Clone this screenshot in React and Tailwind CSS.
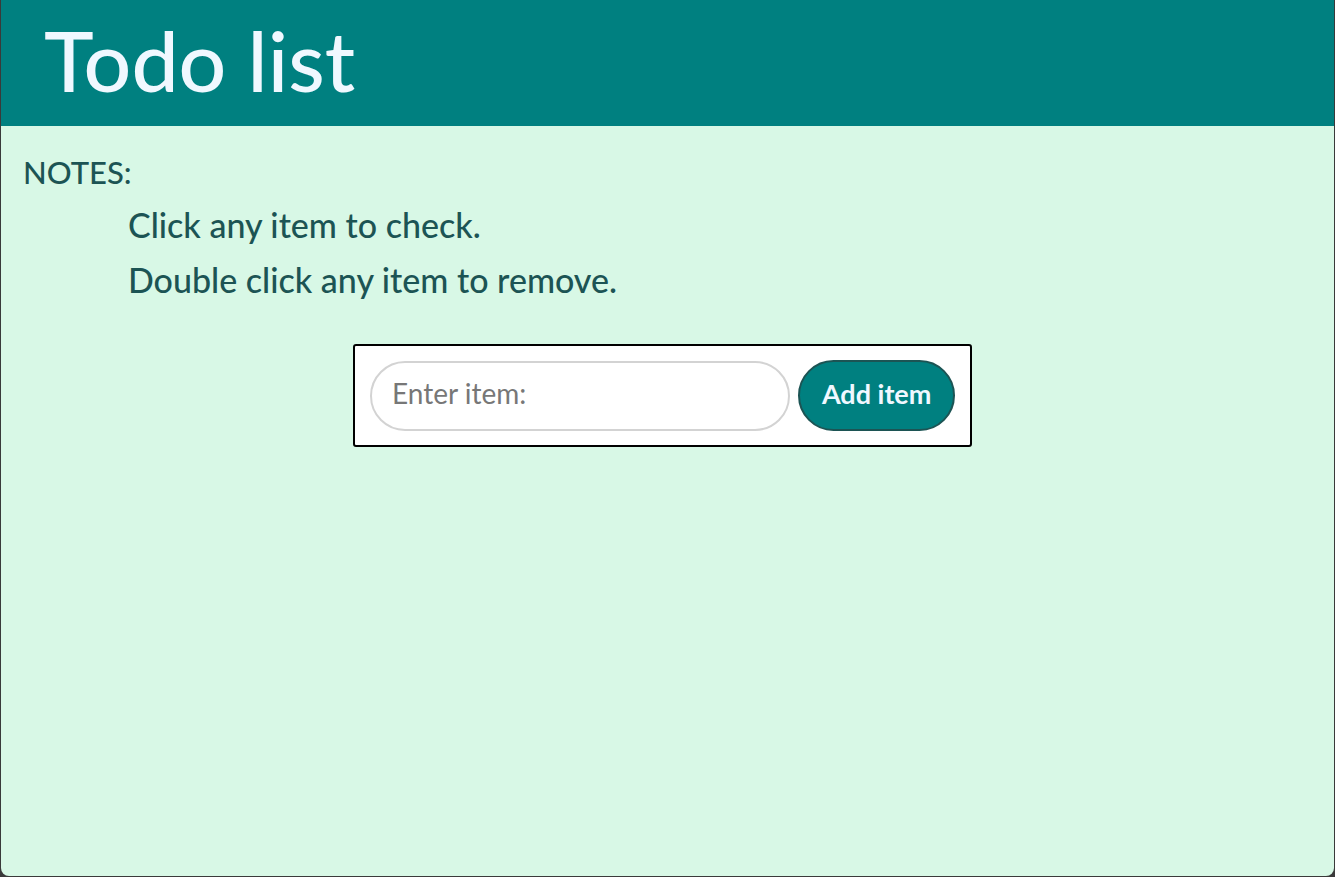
import React, { useState } from 'react';

const font = { fontFamily: 'Lato, "Noto Sans", sans-serif' };

const App = () => {
  const [items, setItems] = useState([]);
  const [text, setText] = useState('');

  const addItem = () => {
    if (!text.trim()) return;
    setItems([...items, { text, done: false }]);
    setText('');
  };

  return (
    <div className="h-screen bg-[#3a3a3a] px-px pb-px" style={font}>
      <div className="h-full rounded-b-[8px] bg-[#d8f8e6] overflow-hidden">
        <header className="h-[126px] bg-[#008080] pl-[43px] pt-[10px]">
          <h1 className="text-[84px] font-medium leading-[100px] text-[#f0f8ff]">Todo list</h1>
        </header>

        <div className="pl-[22px] pt-[26px] font-medium text-[#1c5454]">
          <p className="text-[31px] leading-[40px]">NOTES:</p>
          <ul className="mt-[5px] pl-[105px] text-[34px] leading-[55px]">
            <li>Click any item to check.</li>
            <li>Double click any item to remove.</li>
          </ul>
        </div>

        <div className="mt-[37px] flex justify-center pr-[10px]">
          <div className="flex w-[619px] items-center gap-[8px] rounded-[3px] border-2 border-black bg-white px-[15px] py-[14px]">
            <input
              value={text}
              onChange={(e) => setText(e.target.value)}
              placeholder="Enter item:"
              className="h-[70px] w-[421px] rounded-full border-2 border-[#d3d3d3] px-[20px] pb-[6px] text-[28px] text-[#333] placeholder:text-[#777] outline-none"
            />
            <button
              onClick={addItem}
              className="h-[71px] w-[157px] rounded-full border-2 border-[#1c5454] bg-[#008080] pb-[3px] text-[27px] font-bold text-[#f0f8ff]"
            >
              Add item
            </button>
          </div>
        </div>

        <ul className="mx-auto mt-4 w-[617px] text-[28px] text-[#1c5454]">
          {items.map((item, idx) => (
            <li
              key={idx}
              onClick={() => setItems(items.map((it, i) => (i === idx ? { ...it, done: !it.done } : it)))}
              onDoubleClick={() => setItems(items.filter((_, i) => i !== idx))}
              className={item.done ? 'line-through' : ''}
            >
              {item.text}
            </li>
          ))}
        </ul>
      </div>
    </div>
  );
};

export default App;
